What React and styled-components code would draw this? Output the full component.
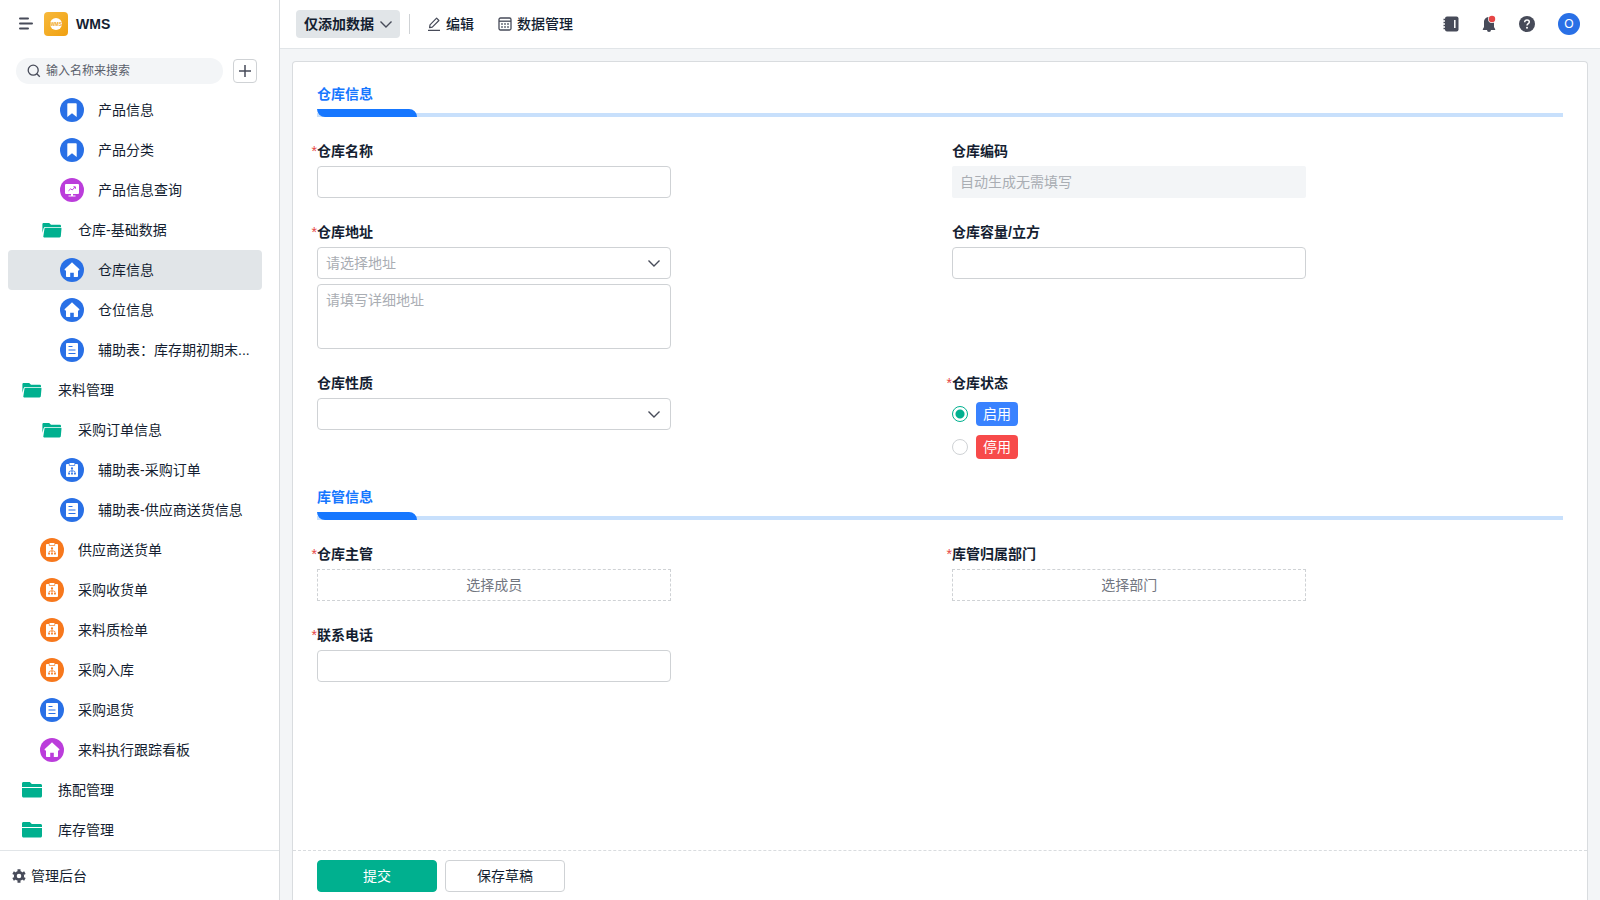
/*
 *
 * Warehouse form page
 *
 */
import React, { useState } from 'react';
import styled, { createGlobalStyle, css } from 'styled-components';

const GlobalStyle = createGlobalStyle`
  *, *::before, *::after {
    box-sizing: border-box;
  }

  body {
    margin: 0;
    color: #141e31;
    font-family: 'Liberation Sans', 'Noto Sans CJK SC', sans-serif;
    font-size: 14px;
    line-height: 21px;
  }

  button, input, select, textarea {
    margin: 0;
    color: inherit;
    font: inherit;
  }
`;

const Page = styled.div`
  display: flex;
  height: 100vh;
  background-color: #f3f5f7;
`;

const Sidebar = styled.aside`
  display: flex;
  flex: none;
  flex-direction: column;
  width: 280px;
  background-color: #fff;
  border-right: 1px solid #d9dcdf;
`;

const Brand = styled.div`
  display: flex;
  align-items: center;
  gap: 8px;
  height: 48px;
  padding-left: 16px;
`;

const IconButton = styled.button`
  display: inline-flex;
  align-items: center;
  justify-content: center;
  width: ${(props) => props.$size || 20}px;
  height: ${(props) => props.$size || 20}px;
  padding: 0;
  color: #474b59;
  background: none;
  border: 0;
  cursor: pointer;
`;

const BrandName = styled.strong`
  font-size: 14px;
`;

const SearchRow = styled.div`
  display: flex;
  align-items: center;
  gap: 10px;
  padding: 10px 22px 6px 16px;
`;

const SearchBox = styled.label`
  display: flex;
  flex: 1;
  align-items: center;
  gap: 4px;
  min-width: 0;
  height: 26px;
  padding: 0 10px;
  color: #474b59;
  background-color: #f3f5f7;
  border-radius: 13px;
`;

const SearchInput = styled.input`
  flex: 1;
  min-width: 0;
  padding: 0;
  font-size: 12px;
  background: none;
  border: 0;
  outline: none;

  &::placeholder {
    color: #5a5f6b;
    opacity: 1;
  }
`;

const AddButton = styled(IconButton)`
  border: 1px solid #cfd2d5;
  border-radius: 4px;
`;

const NavList = styled.nav`
  flex: 1;
  min-height: 0;
  padding: 0 17px 0 8px;
  overflow: hidden;
`;

const NavItem = styled.a`
  display: flex;
  align-items: center;
  gap: 14px;
  height: 40px;
  padding: 0 10px 0 ${(props) => props.$level * 20 - 8}px;
  color: inherit;
  text-decoration: none;
  background-color: ${(props) => (props.$active ? '#e1e5e8' : 'transparent')};
  border-radius: 4px;
`;

const NavIconSlot = styled.span`
  display: flex;
  flex: none;
`;

const NavLabel = styled.span`
  overflow: hidden;
  text-overflow: ellipsis;
  white-space: nowrap;
`;

const AdminLink = styled.a`
  display: flex;
  flex: none;
  align-items: center;
  gap: 5px;
  height: 50px;
  padding: 1px 0 0 12px;
  color: inherit;
  text-decoration: none;
  border-top: 1px solid #e1e5e8;
`;

const Main = styled.div`
  display: flex;
  flex: 1;
  flex-direction: column;
  min-width: 0;
`;

const Toolbar = styled.header`
  display: flex;
  flex: none;
  align-items: center;
  height: 49px;
  padding: 0 20px 0 16px;
  background-color: #fff;
  border-bottom: 1px solid #e1e5e8;
`;

const ToolButton = styled.button`
  display: inline-flex;
  align-items: center;
  gap: 5px;
  height: 28px;
  padding: 0;
  font-weight: 500;
  background: none;
  border: 0;
  cursor: pointer;

  & + & {
    margin-left: 24px;
  }
`;

const ModeButton = styled(ToolButton)`
  gap: 6px;
  padding: 0 8px;
  font-weight: 700;
  background-color: #e1e5e8;
  border-radius: 4px;
`;

const Divider = styled.span`
  width: 1px;
  height: 20px;
  margin: 0 17px 0 9px;
  background-color: #cfd2d5;
`;

const ToolbarEnd = styled.div`
  display: flex;
  align-items: center;
  gap: 18px;
  margin-left: auto;
`;

const Avatar = styled.button`
  width: 22px;
  height: 22px;
  margin-left: 3px;
  padding: 0;
  color: #fff;
  font-size: 12px;
  line-height: 22px;
  background-color: #2970e6;
  border: 0;
  border-radius: 50%;
`;

const Card = styled.form`
  display: flex;
  flex: 1;
  flex-direction: column;
  min-height: 0;
  margin: 12px 12px 0;
  background-color: #fff;
  border: 1px solid #d9dcdf;
  border-bottom: 0;
  border-radius: 4px 4px 0 0;
`;

const CardBody = styled.div`
  display: flex;
  flex: 1;
  flex-direction: column;
  gap: 24px;
  min-height: 0;
  padding: 21px 24px;
  overflow: hidden;
`;

const SectionTitle = styled.h2`
  margin: 0;
  padding-bottom: 4px;
  color: #1677ff;
  font-size: 14px;
  font-weight: 700;
  line-height: 22px;
`;

const SectionBar = styled.div`
  height: 8px;
  background: linear-gradient(#c8e0fc, #c8e0fc) bottom / 100% 4px no-repeat;

  &::before {
    display: block;
    width: 100px;
    height: 8px;
    content: '';
    background-color: #1677ff;
    border-radius: 0 8px 0 8px;
  }
`;

const FieldGrid = styled.div`
  display: grid;
  grid-template-columns: 1fr 1fr;
  gap: 24px;
  align-items: start;
`;

const FieldBox = styled.div`
  width: 58%;
  min-width: 0;
`;

const FieldLabel = styled.label`
  position: relative;
  display: block;
  margin-bottom: 4px;
  font-weight: 700;

  &::before {
    position: absolute;
    right: 100%;
    color: #e64545;
    font-weight: 400;
    content: ${(props) => (props.$required ? "'*'" : 'none')};
  }
`;

const control = css`
  display: block;
  width: 100%;
  height: 32px;
  padding: 0 8px;
  background-color: #fff;
  border: 1px solid #cfd2d5;
  border-radius: 4px;
  outline: none;

  &::placeholder {
    color: #a9adb3;
    opacity: 1;
  }

  &:focus {
    border-color: #00b08f;
  }
`;

const TextInput = styled.input`
  ${control}

  &:disabled {
    background-color: #f3f5f7;
    border: 0;
    border-radius: 2px;
  }
`;

const TextArea = styled.textarea`
  ${control}
  height: 65px;
  margin-top: 5px;
  padding: 5px 8px;
  resize: none;
`;

const SelectShell = styled.div`
  display: grid;
  align-items: center;

  & > * {
    grid-area: 1 / 1;
  }

  & > svg {
    justify-self: end;
    margin-right: 11px;
    pointer-events: none;
  }
`;

const Select = styled.select`
  ${control}
  color: #a9adb3;
  appearance: none;
`;

const PickButton = styled.button`
  ${control}
  color: #72767f;
  border-style: dashed;
  border-radius: 0;
  cursor: pointer;
`;

const RadioList = styled.div`
  display: flex;
  flex-direction: column;
  gap: 9px;
  padding: 4px 0 3px;
`;

const RadioItem = styled.label`
  display: flex;
  align-items: center;
  gap: 8px;
  height: 24px;
`;

const Radio = styled.input`
  width: 16px;
  height: 16px;
  background-color: #fff;
  border: 1px solid #cfd2d5;
  border-radius: 50%;
  appearance: none;

  &:checked {
    background: radial-gradient(circle, #00b08f 4px, #fff 5px);
    border-color: #00b08f;
  }
`;

const Tag = styled.span`
  padding: 0 7px;
  color: #fff;
  line-height: 24px;
  background-color: ${(props) => props.$color};
  border-radius: 4px;
`;

const CardFooter = styled.footer`
  display: flex;
  flex: none;
  gap: 8px;
  padding: 9px 24px 8px;
  border-top: 1px dashed #d9dcdf;
`;

const ActionButton = styled.button`
  width: 120px;
  height: 32px;
  padding: 0;
  color: ${(props) => (props.$primary ? '#fff' : 'inherit')};
  background-color: ${(props) => (props.$primary ? '#00b08f' : '#fff')};
  border: 1px solid ${(props) => (props.$primary ? '#00b08f' : '#cfd2d5')};
  border-radius: 4px;
  cursor: pointer;
`;

const BLUE = '#2970e6';
const ORANGE = '#f7781d';
const PURPLE = '#bb3ddb';

const glyphs = {
  bookmark: () => <path d="M7.3 6c0-.5.3-.8.8-.8h7.800c.5 0 .8.3.8.8v13L12 15.200 7.300 19z" fill="#fff" />,
  home: () => (
    <path d="M11.300 4.900c.4-.4 1-.4 1.400 0l6.500 6.200c.5.500.2 1.300-.5 1.300H18v5.600c0 .6-.4 1-1 1h-3.200v-4.200h-3.600V19H7c-.6 0-1-.4-1-1v-5.600h-.7c-.7 0-1-.8-.5-1.300z" fill="#fff" />
  ),
  form: (color) => (
    <>
      <rect x="6" y="5" width="12" height="14" rx="1" fill="#fff" />
      <path d="M8.500 8.500h4M8.500 12h7M8.500 15.500h7" stroke={color} strokeWidth="1.200" />
    </>
  ),
  flow: (color) => (
    <>
      <rect x="6" y="6" width="12" height="13" rx="1" fill="#fff" />
      <path d="M9.500 5h5v2.200h-5z" fill="#fff" />
      <path d="M9.300 6v1.500h5.400V6" fill="none" stroke={color} strokeWidth="0.700" />
      <circle cx="12" cy="10.300" r="1.100" fill={color} />
      <path d="M12 10.500v5M9 15.500v-1.800l1.200-.7h3.600l1.200.7v1.800" fill="none" stroke={color} strokeWidth="0.800" />
      <path d="M8.200 15h1.700v1.600H8.200zM11.150 15h1.700v1.600h-1.700zM14.100 15h1.700v1.600h-1.700z" fill={color} />
    </>
  ),
  chart: (color) => (
    <>
      <rect x="5" y="6" width="14" height="10" rx="1" fill="#fff" />
      <path d="M11 16h2v1.500h2.500V18.500h-7v-1H11z" fill="#fff" />
      <path d="M8.500 12.800l2.200-2 1.500 1.200 3-3M13.400 8.800h2v2" fill="none" stroke={color} strokeWidth="1" />
    </>
  ),
};

function NavIcon({ type, color }) {
  if (type === 'folder' || type === 'open') {
    return (
      <svg width="24" height="24" viewBox="0 0 24 24" fill="#00b08f" aria-hidden="true">
        {type === 'folder' ? (
          <>
            <path d="M2 9V5.500C2 4.700 2.600 4 3.500 4h6.300l2 2h8.700c.8 0 1.500.6 1.500 1.400V9z" />
            <path d="M2 10h20v8c0 .8-.7 1.500-1.500 1.500h-17C2.700 19.500 2 18.800 2 18z" />
          </>
        ) : (
          <>
            <path d="M2.400 15V6.300C2.400 5.500 3 5 3.700 5h5.500l1.800 1.700h8.700c.7 0 1.300.5 1.300 1.200v1H5.400c-1 0-1.700.6-1.900 1.500z" />
            <path d="M5.500 9.700h15.200c.5 0 .9.400.8.900l-.7 7.700c-.1.600-.6 1.100-1.200 1.100H4.100c-.5 0-.9-.4-.8-.9l1.200-7.900c.1-.5.500-.9 1-.9z" />
          </>
        )}
      </svg>
    );
  }
  return (
    <svg width="24" height="24" viewBox="0 0 24 24" aria-hidden="true">
      <circle cx="12" cy="12" r="12" fill={color} />
      {glyphs[type](color)}
    </svg>
  );
}

const StrokeIcon = styled.svg.attrs({ fill: 'none', stroke: 'currentColor', 'aria-hidden': true })`
  flex: none;
  color: #474b59;
`;

const Chevron = () => (
  <StrokeIcon width="12" height="12" viewBox="0 0 12 12" strokeWidth="1.400">
    <path d="M0.500 3.500l5.500 5.500L11.500 3.500" />
  </StrokeIcon>
);

const navItems = [
  { label: '产品信息', level: 3, type: 'bookmark', color: BLUE },
  { label: '产品分类', level: 3, type: 'bookmark', color: BLUE },
  { label: '产品信息查询', level: 3, type: 'chart', color: PURPLE },
  { label: '仓库-基础数据', level: 2, type: 'open' },
  { label: '仓库信息', level: 3, type: 'home', color: BLUE, active: true },
  { label: '仓位信息', level: 3, type: 'home', color: BLUE },
  { label: '辅助表：库存期初期末...', level: 3, type: 'form', color: BLUE },
  { label: '来料管理', level: 1, type: 'open' },
  { label: '采购订单信息', level: 2, type: 'open' },
  { label: '辅助表-采购订单', level: 3, type: 'flow', color: BLUE },
  { label: '辅助表-供应商送货信息', level: 3, type: 'form', color: BLUE },
  { label: '供应商送货单', level: 2, type: 'flow', color: ORANGE },
  { label: '采购收货单', level: 2, type: 'flow', color: ORANGE },
  { label: '来料质检单', level: 2, type: 'flow', color: ORANGE },
  { label: '采购入库', level: 2, type: 'flow', color: ORANGE },
  { label: '采购退货', level: 2, type: 'form', color: BLUE },
  { label: '来料执行跟踪看板', level: 2, type: 'home', color: PURPLE },
  { label: '拣配管理', level: 1, type: 'folder' },
  { label: '库存管理', level: 1, type: 'folder' },
];

function Field({ id, label, required, children }) {
  return (
    <FieldBox>
      <FieldLabel htmlFor={id} $required={required}>{label}</FieldLabel>
      {children}
    </FieldBox>
  );
}

function Section({ title, children }) {
  return (
    <>
      <div>
        <SectionTitle>{title}</SectionTitle>
        <SectionBar />
      </div>
      <FieldGrid>{children}</FieldGrid>
    </>
  );
}

function AppSidebar() {
  return (
    <Sidebar>
      <Brand>
        <IconButton type="button" aria-label="菜单">
          <StrokeIcon width="20" height="20" viewBox="0 0 20 20" strokeWidth="2" strokeLinecap="round">
            <path d="M4 4.500h8M4 9.500h12M4 14.500h8" />
          </StrokeIcon>
        </IconButton>
        <svg width="24" height="24" viewBox="0 0 24 24" aria-hidden="true">
          <defs>
            <linearGradient id="brand" x1="0" y1="0" x2="1" y2="1">
              <stop offset="0" stopColor="#f7b93c" />
              <stop offset="1" stopColor="#f0a010" />
            </linearGradient>
          </defs>
          <rect width="24" height="24" rx="4" fill="url(#brand)" />
          <circle cx="12" cy="12" r="6" fill="#fff" />
          <text x="12" y="14" fontSize="5" fontWeight="700" textAnchor="middle" fill="#f2a71e">WMS</text>
        </svg>
        <BrandName>WMS</BrandName>
      </Brand>
      <SearchRow>
        <SearchBox>
          <StrokeIcon width="16" height="16" viewBox="0 0 16 16" strokeWidth="1.300">
            <circle cx="7.200" cy="7.200" r="5" />
            <path d="M10.800 10.800l3 3" />
          </StrokeIcon>
          <SearchInput placeholder="输入名称来搜索" aria-label="搜索" />
        </SearchBox>
        <AddButton type="button" $size={24} aria-label="新建">
          <StrokeIcon width="12" height="12" viewBox="0 0 12 12" strokeWidth="1.500">
            <path d="M6 0v12M0 6h12" />
          </StrokeIcon>
        </AddButton>
      </SearchRow>
      <NavList>
        {navItems.map((item) => (
          <NavItem key={item.label} href="#" $level={item.level} $active={item.active}>
            <NavIconSlot><NavIcon type={item.type} color={item.color} /></NavIconSlot>
            <NavLabel>{item.label}</NavLabel>
          </NavItem>
        ))}
      </NavList>
      <AdminLink href="#">
        <svg width="14" height="14" viewBox="0 0 14 14" aria-hidden="true">
          <circle cx="7" cy="7" r="3.700" fill="none" stroke="#474b59" strokeWidth="2.800" />
          <path d="M7 .2v2.300M7 11.500v2.300M1.100 3.600l2 1.150M10.900 9.250l2 1.150M1.100 10.400l2-1.150M10.900 4.750l2-1.150" stroke="#474b59" strokeWidth="3" />
        </svg>
        管理后台
      </AdminLink>
    </Sidebar>
  );
}

function AppToolbar() {
  return (
    <Toolbar>
      <ModeButton type="button">
        仅添加数据
        <Chevron />
      </ModeButton>
      <Divider />
      <ToolButton type="button">
        <StrokeIcon width="14" height="14" viewBox="0 0 14 14" strokeWidth="1.200" strokeLinejoin="round">
          <path d="M1 13.300h12M2.600 10.600l.4-2.800 6.600-6.600 2.300 2.300-6.600 6.600z" />
        </StrokeIcon>
        编辑
      </ToolButton>
      <ToolButton type="button">
        <StrokeIcon width="14" height="14" viewBox="0 0 14 14" strokeWidth="1.300">
          <rect x="1" y="1" width="12" height="12" rx="1.500" />
          <path d="M1 4.200h12" />
          <path d="M3.200 7h1.600M6.200 7h1.600M9.200 7h1.600M3.200 10h1.600M6.200 10h1.600M9.200 10h1.600" strokeWidth="1.500" />
        </StrokeIcon>
        数据管理
      </ToolButton>
      <ToolbarEnd>
        <IconButton type="button" aria-label="通讯录">
          <svg width="20" height="20" viewBox="0 0 20 20" aria-hidden="true">
            <rect x="4" y="2.500" width="13.500" height="15" rx="2" fill="#474b59" />
            <path d="M2.500 5.500h3M2.500 8.500h3M2.500 11.500h3M2.500 14.500h3" stroke="#474b59" strokeWidth="1.300" />
            <path d="M13.800 6v8" stroke="#fff" strokeWidth="1.500" />
          </svg>
        </IconButton>
        <IconButton type="button" aria-label="通知">
          <svg width="20" height="20" viewBox="0 0 20 20" aria-hidden="true">
            <path d="M10 3c3 0 5 2.300 5 5v5l1.200 2.200v.8H12a2 2 0 01-4 0H3.800v-.8L5 13V8c0-2.700 2-5 5-5z" fill="#474b59" />
            <circle cx="13" cy="5" r="3.900" fill="#fff" />
            <circle cx="13" cy="5" r="3.200" fill="#e64545" />
          </svg>
        </IconButton>
        <IconButton type="button" aria-label="帮助">
          <svg width="20" height="20" viewBox="0 0 20 20" aria-hidden="true">
            <circle cx="10" cy="10" r="8" fill="#474b59" />
            <path d="M7.700 8.200c0-1.400 1-2.300 2.300-2.300s2.300.8 2.300 2c0 1.700-2.300 1.800-2.300 3.600" fill="none" stroke="#fff" strokeWidth="1.500" />
            <circle cx="10" cy="13.700" r="1" fill="#fff" />
          </svg>
        </IconButton>
        <Avatar type="button">O</Avatar>
      </ToolbarEnd>
    </Toolbar>
  );
}

export default function App() {
  const [status, setStatus] = useState('启用');

  return (
    <>
      <GlobalStyle />
      <Page>
        <AppSidebar />
        <Main>
          <AppToolbar />
          <Card onSubmit={(e) => e.preventDefault()}>
            <CardBody>
              <Section title="仓库信息">
                <Field id="name" label="仓库名称" required>
                  <TextInput id="name" />
                </Field>
                <Field id="code" label="仓库编码">
                  <TextInput id="code" placeholder="自动生成无需填写" disabled />
                </Field>
                <Field id="region" label="仓库地址" required>
                  <SelectShell>
                    <Select id="region"><option>请选择地址</option></Select>
                    <Chevron />
                  </SelectShell>
                  <TextArea placeholder="请填写详细地址" aria-label="详细地址" />
                </Field>
                <Field id="capacity" label="仓库容量/立方">
                  <TextInput id="capacity" />
                </Field>
                <Field id="kind" label="仓库性质">
                  <SelectShell>
                    <Select id="kind" />
                    <Chevron />
                  </SelectShell>
                </Field>
                <Field id="status-启用" label="仓库状态" required>
                  <RadioList>
                    {[['启用', '#3982ff'], ['停用', '#f74a4a']].map(([value, color]) => (
                      <RadioItem key={value}>
                        <Radio
                          type="radio"
                          name="status"
                          id={`status-${value}`}
                          checked={status === value}
                          onChange={() => setStatus(value)}
                        />
                        <Tag $color={color}>{value}</Tag>
                      </RadioItem>
                    ))}
                  </RadioList>
                </Field>
              </Section>
              <Section title="库管信息">
                <Field id="manager" label="仓库主管" required>
                  <PickButton type="button" id="manager">选择成员</PickButton>
                </Field>
                <Field id="department" label="库管归属部门" required>
                  <PickButton type="button" id="department">选择部门</PickButton>
                </Field>
                <Field id="phone" label="联系电话" required>
                  <TextInput id="phone" />
                </Field>
              </Section>
            </CardBody>
            <CardFooter>
              <ActionButton type="submit" $primary>提交</ActionButton>
              <ActionButton type="button">保存草稿</ActionButton>
            </CardFooter>
          </Card>
        </Main>
      </Page>
    </>
  );
}
